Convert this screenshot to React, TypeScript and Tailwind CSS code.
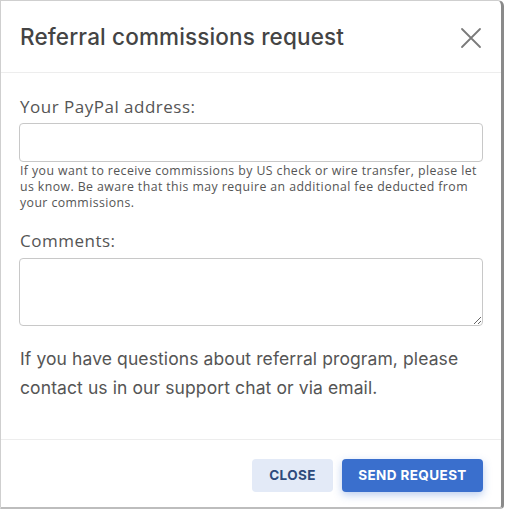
import React from "react";

export default function App() {
  return (
    <div className="w-[505px] h-[510px] bg-white">
      <div className="w-[504px] h-[509px] flex flex-col bg-white border-t border-l border-[#cfcfcf] border-r-[3px] border-r-[#8a8a8a] border-b-2 border-b-[#bdbdbd] rounded-tr-[6px] rounded-br-[4px] overflow-hidden">
        <div className="h-[72px] flex items-center justify-between pl-[19px] pr-[19px] border-b border-[#ededed] shrink-0">
          <h1 className="text-[22.5px] font-medium text-[#444] tracking-[0.15px] pt-[1px]" style={{ fontFamily: "Inter, 'Noto Sans', sans-serif" }}>
            Referral commissions request
          </h1>
          <svg width="22" height="22" viewBox="0 0 22 22" className="mt-[2px]">
            <path d="M2 2 L20 20 M20 2 L2 20" stroke="#7a7a7a" strokeWidth="1.8" strokeLinecap="round" />
          </svg>
        </div>
        <div className="flex-1 px-[18px] pt-[23px]" style={{ fontFamily: "'Open Sans', 'Noto Sans', sans-serif" }}>
          <label className="block text-[17px] text-[#555] leading-[21px] mb-[6px] tracking-[0.5px] pl-[1px]">Your PayPal address:</label>
          <input className="block w-full h-[39px] border border-[#c8c8c8] rounded-[4px] outline-none" />
          <p className="text-[12.3px] text-[#555] leading-[16px] mt-[1px] pl-[1px] tracking-[0.42px]">
            If you want to receive commissions by US check or wire transfer, please let us know. Be aware that this may require an additional fee deducted from your commissions.
          </p>
          <label className="block text-[17px] text-[#555] leading-[21px] mt-[19px] mb-[7px] tracking-[0.5px] pl-[1px]">Comments:</label>
          <textarea className="block w-full h-[68px] border border-[#c8c8c8] rounded-[4px] outline-none" />
          <p className="text-[17.5px] text-[#555] leading-[29px] mt-[18px] pl-[1px] tracking-[0.1px]" style={{ fontFamily: "Inter, 'Noto Sans', sans-serif" }}>
            If you have questions about referral program, please contact us in our support chat or via email.
          </p>
        </div>
        <div className="h-[68px] shrink-0 border-t border-[#ededed] flex items-start justify-end gap-[9px] pr-[18px] pt-[19px]" style={{ fontFamily: "Inter, 'Noto Sans', sans-serif" }}>
          <button className="w-[81px] h-[33px] rounded-[4px] bg-[#e3eaf7] text-[#2d4a7c] text-[13.5px] font-bold tracking-[0.4px]">CLOSE</button>
          <button className="w-[141px] h-[33px] rounded-[4px] bg-[#3a6fcd] text-white text-[13.5px] font-bold tracking-[0.4px] shadow-[0_3px_8px_rgba(58,111,205,0.35)]">SEND REQUEST</button>
        </div>
      </div>
    </div>
  );
}
